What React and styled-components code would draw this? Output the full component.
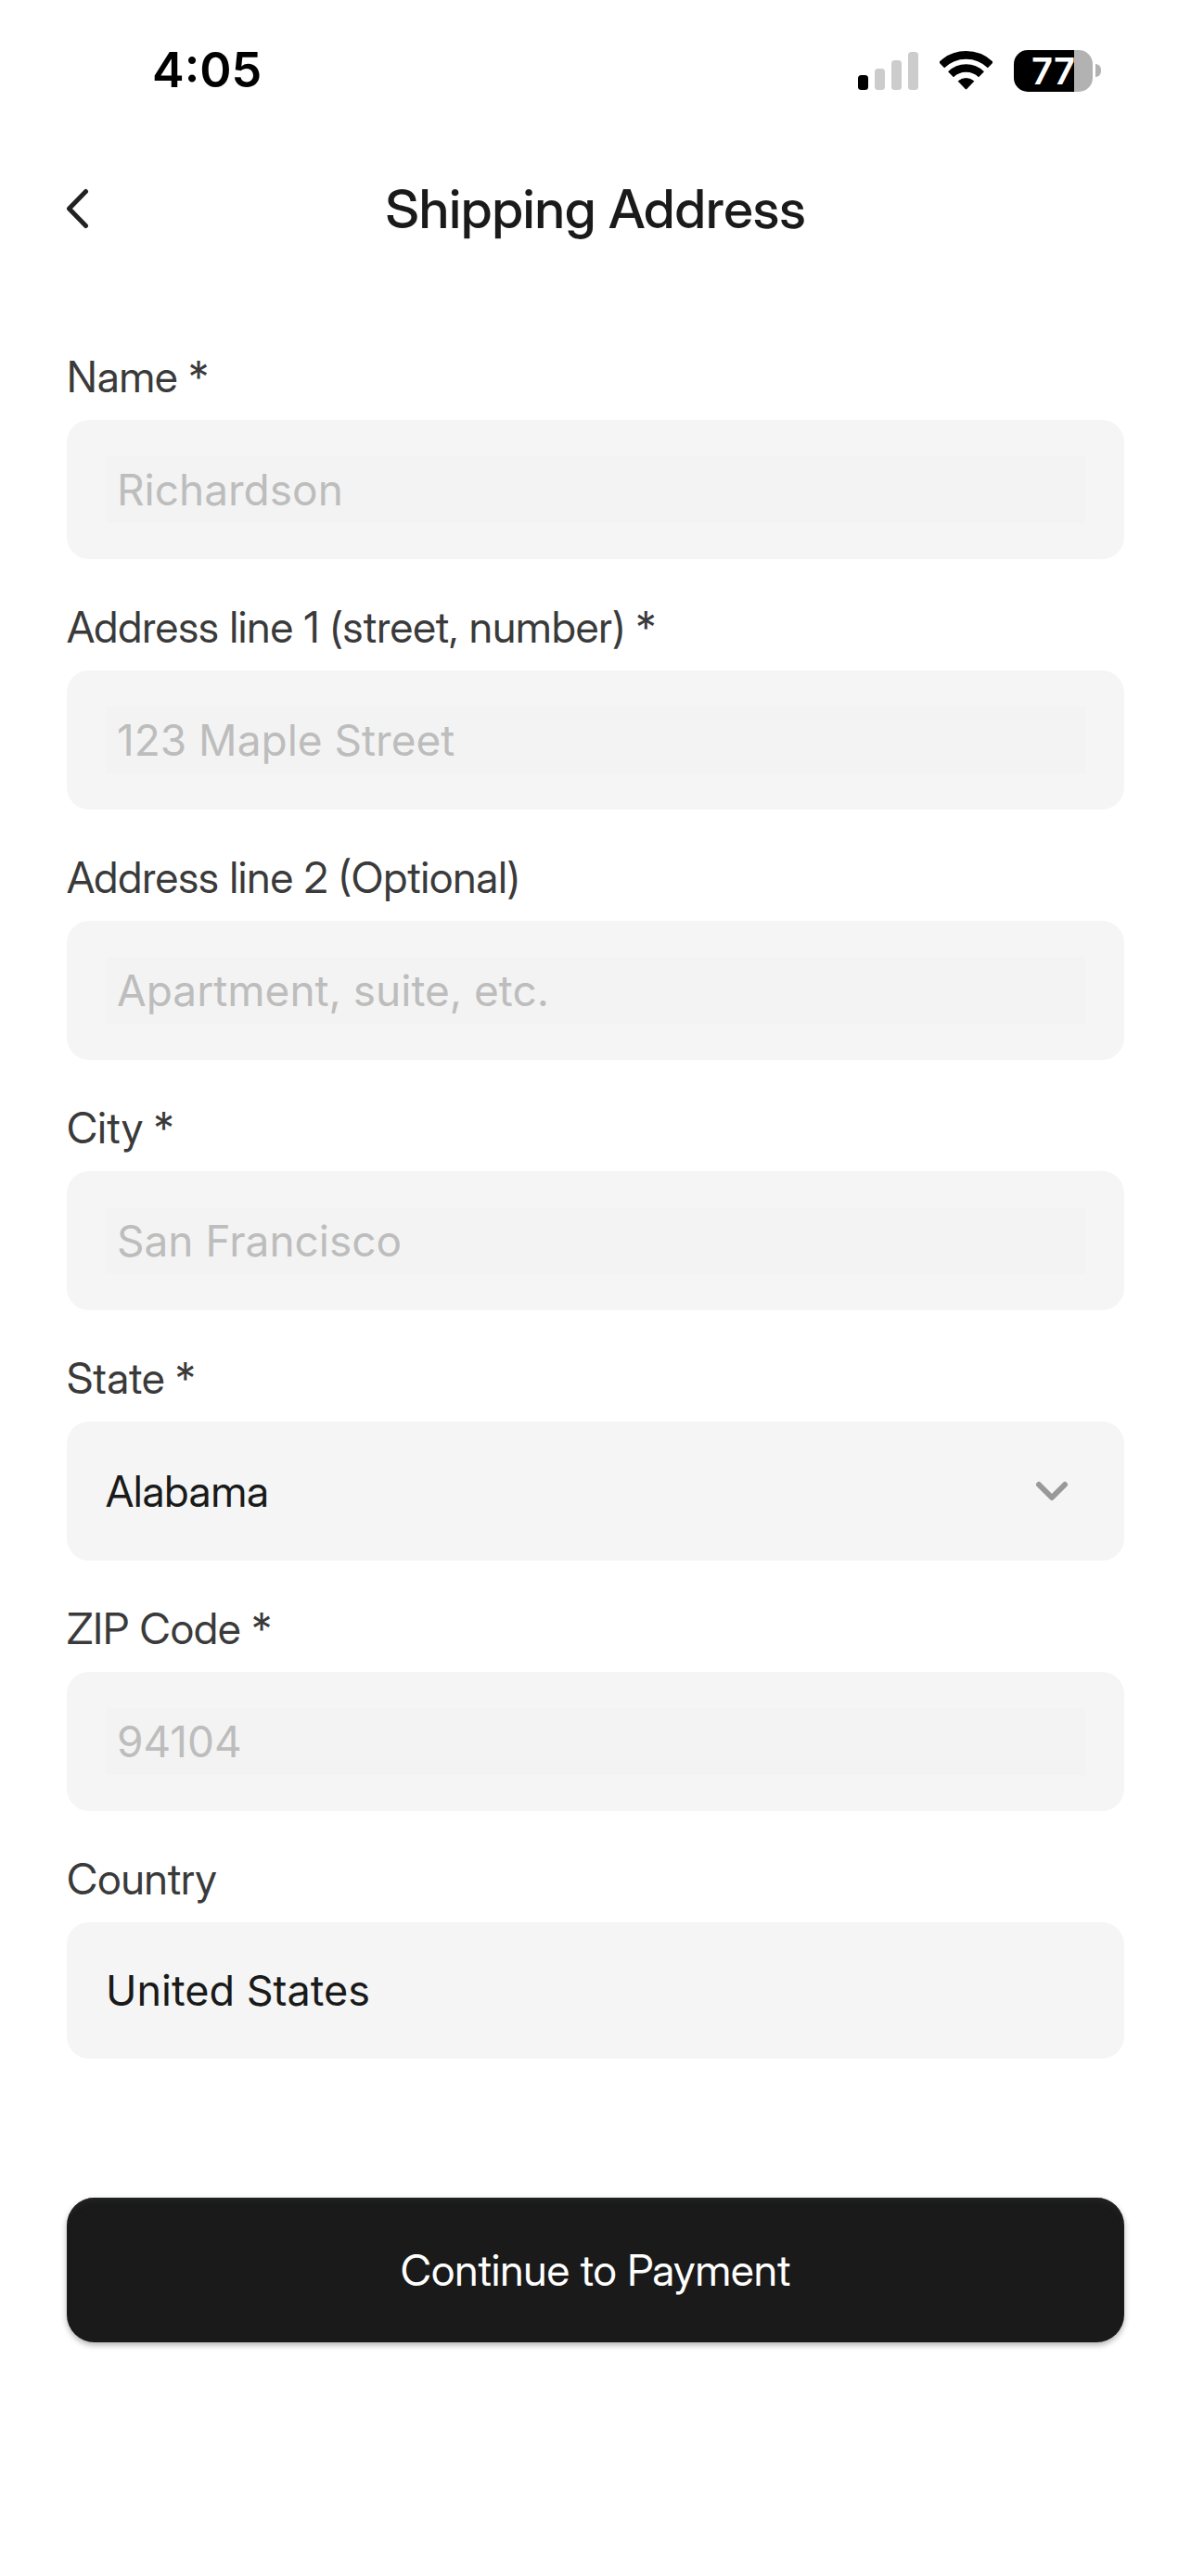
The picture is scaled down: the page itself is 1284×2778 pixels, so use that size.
import React from "react";
import styled, { createGlobalStyle } from "styled-components";

const textFont = 'Inter, "Liberation Sans", sans-serif';

const GlobalStyle = createGlobalStyle`
  *, *::before, *::after { box-sizing: border-box; }
  body {
    margin: 0;
    background: #fff;
    color: #1a1a1a;
    font-family: "Inter Display", ${textFont};
  }
  button, input, select { font: inherit; color: inherit; border: 0; margin: 0; }
`;

const Screen = styled.div`
  display: flex;
  flex-direction: column;
  min-height: 100vh;
`;

const StatusBar = styled.div`
  display: flex;
  align-items: center;
  justify-content: space-between;
  height: 152px;
  padding: 0 97px 0 164px;
  color: #000;
  font-family: ${textFont};
`;

const Time = styled.time`
  font-size: 52px;
  font-weight: 600;
  line-height: 64px;
`;

const StatusIcons = styled.div`
  display: flex;
  align-items: center;
  gap: 23px;
`;

const BatteryGroup = styled.div`
  display: flex;
  align-items: center;
  gap: 3px;
`;

const BatteryBody = styled.div`
  width: 85px;
  height: 45px;
  border-radius: 15px;
  background: linear-gradient(to right, #000 77%, #b2b2b2 77%);
  color: #fff;
  font-size: 40px;
  font-weight: 600;
  line-height: 45px;
  text-align: center;
`;

const BatteryCap = styled.div`
  width: 6px;
  height: 14px;
  border-radius: 0 6px 6px 0;
  background: #b2b2b2;
`;

const Header = styled.header`
  display: grid;
  grid-template-columns: 72px 1fr 72px;
  align-items: center;
  height: 146px;
  padding: 0 60px;
`;

const BackButton = styled.button`
  display: flex;
  align-items: center;
  height: 72px;
  padding: 0 12px;
  background: none;
`;

const Title = styled.h1`
  margin: 0;
  font-size: 58px;
  font-weight: 500;
  line-height: 72px;
  text-align: center;
`;

const Form = styled.form`
  display: flex;
  flex-direction: column;
  gap: 43px;
  padding: 78px 72px;
`;

const Field = styled.div`
  display: flex;
  flex-direction: column;
  gap: 17px;
`;

const Label = styled.label`
  color: #3a3a3a;
  font-size: 46px;
  line-height: 60px;
`;

const InputBox = styled.div`
  display: flex;
  padding: 39px 42px;
  border-radius: 24px;
  background: #f5f5f5;
`;

const TextInput = styled.input`
  width: 100%;
  height: 72px;
  padding: 0 12px;
  background: #f3f3f3;
  font-family: ${textFont};
  font-size: 46px;
  outline: none;
  &::placeholder { color: #bdbdbd; opacity: 1; }
`;

const SelectBox = styled.div`
  display: grid;
  align-items: center;
  border-radius: 24px;
  background: #f5f5f5;
  > * { grid-area: 1 / 1; }
`;

const Select = styled.select`
  appearance: none;
  width: 100%;
  height: 150px;
  padding: 0 42px;
  background: transparent;
  font-size: 46px;
  outline: none;
`;

const SelectIcon = styled.svg`
  justify-self: end;
  margin-right: 60px;
  pointer-events: none;
`;

const FixedInput = styled.input`
  width: 100%;
  height: 147px;
  padding: 0 42px;
  border-radius: 24px;
  background: #f5f5f5;
  font-family: ${textFont};
  font-size: 45px;
  outline: none;
`;

const SubmitButton = styled.button`
  height: 156px;
  margin-top: 107px;
  border-radius: 30px;
  background: #1a1a1a;
  box-shadow: 0 3px 6px rgba(0, 0, 0, 0.3), inset 0 6px 6px -3px #232624;
  color: #fff;
  font-size: 46px;
`;

const STATES = [
  "Alabama", "Alaska", "Arizona", "Arkansas", "California", "Colorado", "Connecticut",
  "Delaware", "Florida", "Georgia", "Hawaii", "Idaho", "Illinois", "Indiana", "Iowa",
  "Kansas", "Kentucky", "Louisiana", "Maine", "Maryland", "Massachusetts", "Michigan",
  "Minnesota", "Mississippi", "Missouri", "Montana", "Nebraska", "Nevada",
  "New Hampshire", "New Jersey", "New Mexico", "New York", "North Carolina",
  "North Dakota", "Ohio", "Oklahoma", "Oregon", "Pennsylvania", "Rhode Island",
  "South Carolina", "South Dakota", "Tennessee", "Texas", "Utah", "Vermont",
  "Virginia", "Washington", "West Virginia", "Wisconsin", "Wyoming",
];

function SignalIcon() {
  return (
    <svg width="65" height="41" viewBox="0 0 65 41" aria-hidden="true">
      <rect x="0" y="25" width="11" height="16" rx="3.5" fill="#000" />
      <rect x="18" y="18" width="11" height="23" rx="3.5" fill="#ccc" />
      <rect x="36" y="9" width="11" height="32" rx="3.5" fill="#ccc" />
      <rect x="54" y="0" width="11" height="41" rx="3.5" fill="#ccc" />
    </svg>
  );
}

function WifiIcon() {
  return (
    <svg width="57" height="42" viewBox="0 0 57 42" aria-hidden="true">
      <g fill="none" stroke="#000">
        <path d="M2.1 15.2A37.6 37.6 0 0 1 54.9 15.2" strokeWidth="8.6" />
        <path d="M12 25.2A23.5 23.5 0 0 1 45 25.2" strokeWidth="8.4" />
      </g>
      <path
        d="M20.2 32.6A13 13 0 0 1 36.8 32.6L28.5 41.2Z"
        stroke="#000"
        strokeWidth="1"
        strokeLinejoin="round"
      />
    </svg>
  );
}

function TextField({ id, label, placeholder }) {
  return (
    <Field>
      <Label htmlFor={id}>{label}</Label>
      <InputBox>
        <TextInput id={id} name={id} type="text" placeholder={placeholder} />
      </InputBox>
    </Field>
  );
}

export default function App() {
  return (
    <Screen>
      <GlobalStyle />
      <StatusBar>
        <Time>4:05</Time>
        <StatusIcons>
          <SignalIcon />
          <WifiIcon />
          <BatteryGroup>
            <BatteryBody>77</BatteryBody>
            <BatteryCap />
          </BatteryGroup>
        </StatusIcons>
      </StatusBar>
      <Header>
        <BackButton type="button" aria-label="Back">
          <svg width="24" height="44" viewBox="0 0 24 44" fill="none" aria-hidden="true">
            <path
              d="M20.5 3.5L2.5 22L20.5 40.5"
              stroke="#222"
              strokeWidth="5"
              strokeLinecap="round"
              strokeLinejoin="round"
            />
          </svg>
        </BackButton>
        <Title>Shipping Address</Title>
      </Header>
      <Form onSubmit={(event) => event.preventDefault()}>
        <TextField id="name" label="Name *" placeholder="Richardson" />
        <TextField
          id="line1"
          label="Address line 1 (street, number) *"
          placeholder="123 Maple Street"
        />
        <TextField
          id="line2"
          label="Address line 2 (Optional)"
          placeholder="Apartment, suite, etc."
        />
        <TextField id="city" label="City *" placeholder="San Francisco" />
        <Field>
          <Label htmlFor="state">State *</Label>
          <SelectBox>
            <Select id="state" name="state" defaultValue="Alabama">
              {STATES.map((state) => (
                <option key={state}>{state}</option>
              ))}
            </Select>
            <SelectIcon width="36" height="22" viewBox="0 0 36 22" fill="none" aria-hidden="true">
              <path
                d="M4 4L18 18L32 4"
                stroke="#999"
                strokeWidth="6"
                strokeLinecap="round"
                strokeLinejoin="round"
              />
            </SelectIcon>
          </SelectBox>
        </Field>
        <TextField id="zip" label="ZIP Code *" placeholder="94104" />
        <Field>
          <Label htmlFor="country">Country</Label>
          <FixedInput id="country" name="country" type="text" value="United States" readOnly />
        </Field>
        <SubmitButton type="submit">Continue to Payment</SubmitButton>
      </Form>
    </Screen>
  );
}
